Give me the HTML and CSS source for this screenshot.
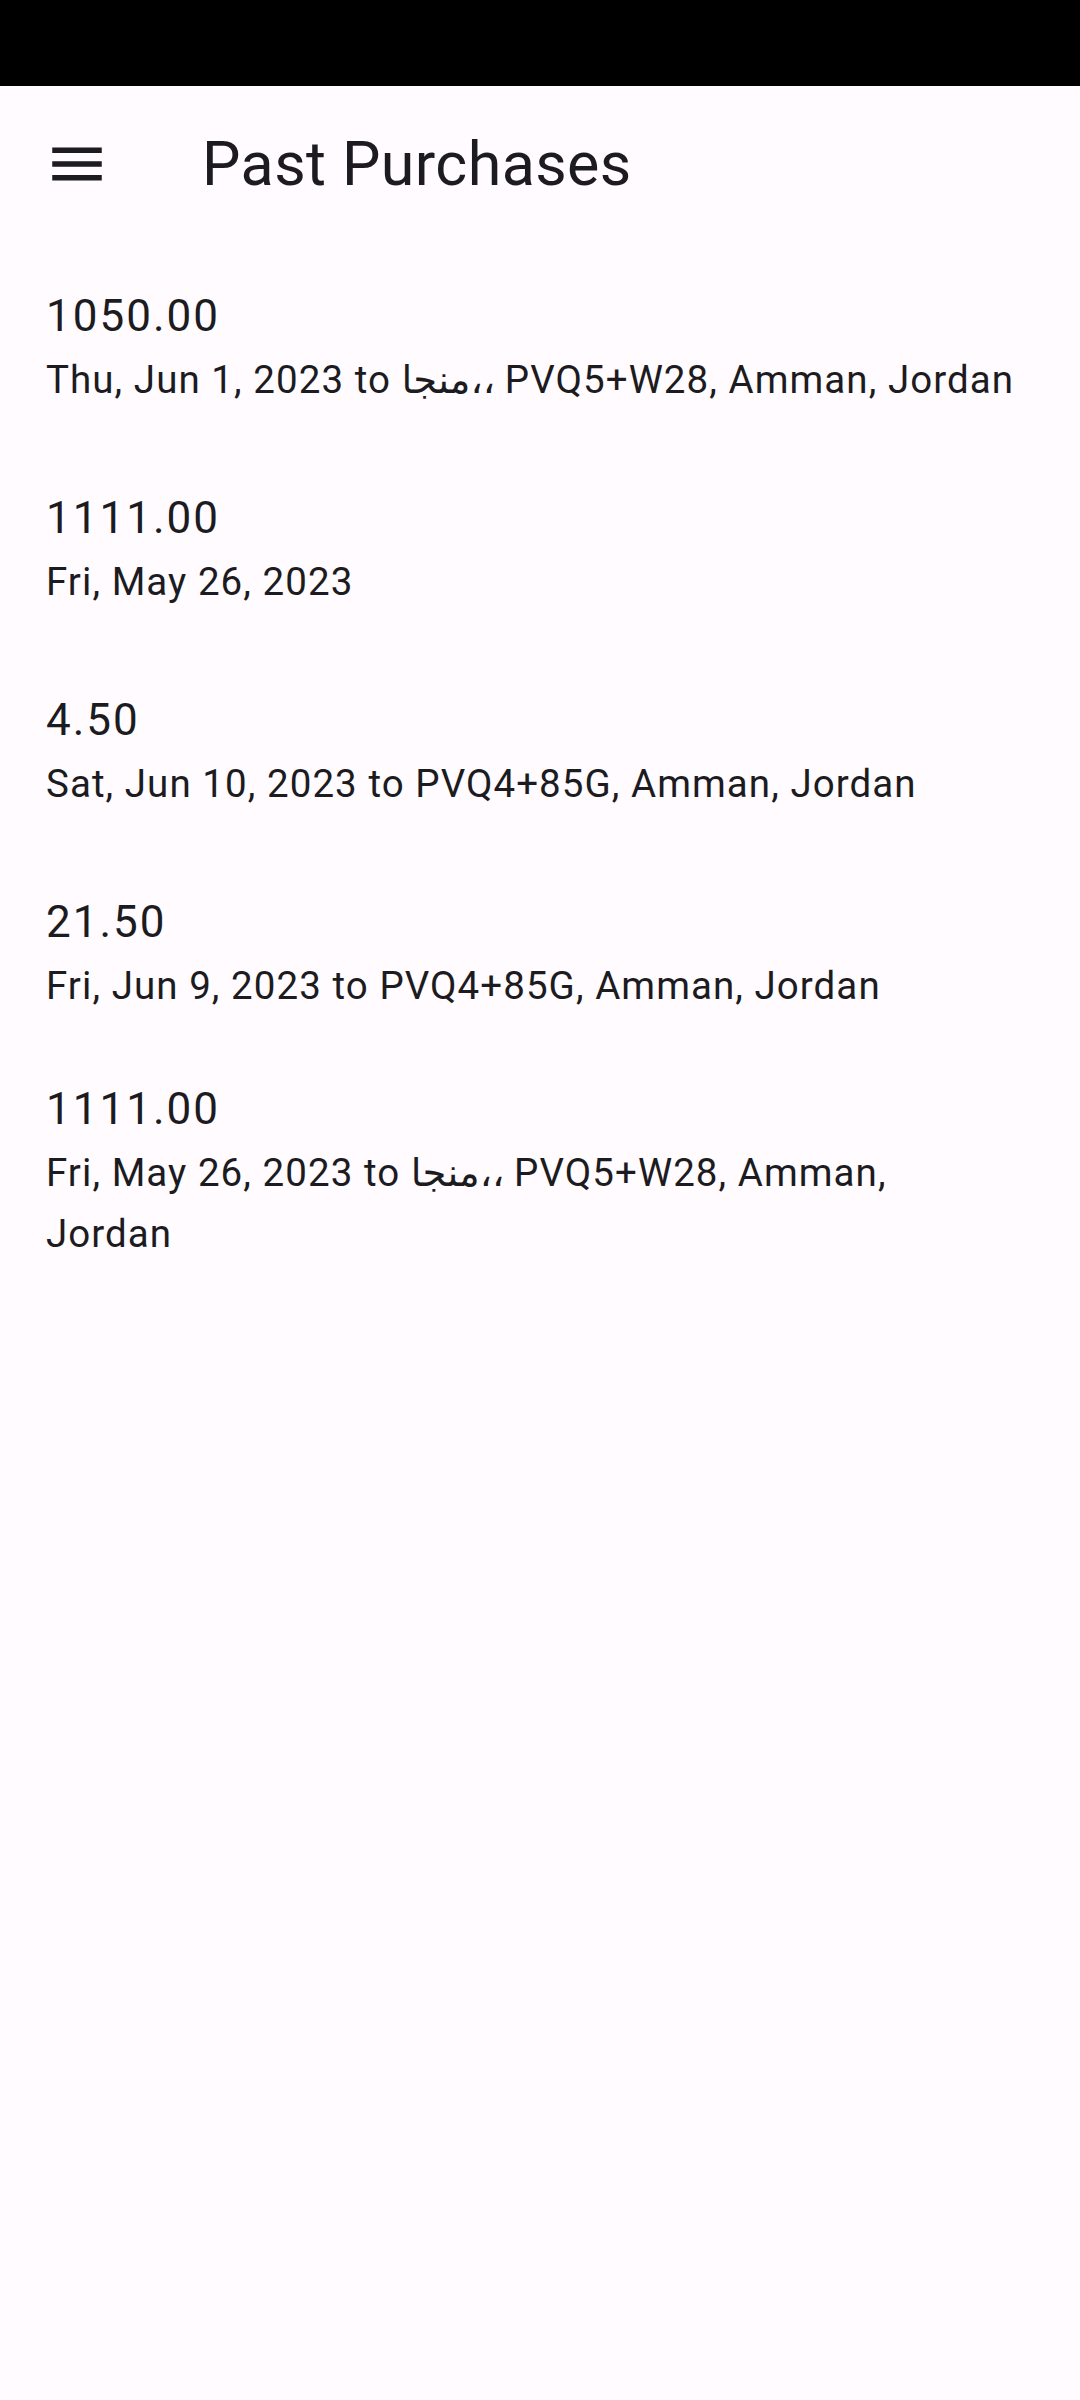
FILE: index.html
```html
<!DOCTYPE html>
<html lang="en">
<head>
<meta charset="utf-8">
<title>Past Purchases</title>
<link rel="stylesheet" href="styles.css">
</head>
<body>
<div class="status-bar"></div>
<header class="app-bar">
  <svg class="menu-icon" viewBox="0 0 24 24" aria-hidden="true">
    <path d="M3 18h18v-2H3v2zm0-5h18v-2H3v2zm0-7v2h18V6H3z"/>
  </svg>
  <h1 class="app-title">Past Purchases</h1>
</header>
<main class="list">
  <div class="tile">
    <div class="amount">1050.00</div>
    <div class="details">Thu, Jun 1, 2023 to منجا،، PVQ5+W28, Amman, Jordan</div>
  </div>
  <div class="tile">
    <div class="amount">1111.00</div>
    <div class="details">Fri, May 26, 2023</div>
  </div>
  <div class="tile">
    <div class="amount">4.50</div>
    <div class="details">Sat, Jun 10, 2023 to PVQ4+85G, Amman, Jordan</div>
  </div>
  <div class="tile">
    <div class="amount">21.50</div>
    <div class="details">Fri, Jun 9, 2023 to PVQ4+85G, Amman, Jordan</div>
  </div>
  <div class="tile tile-three">
    <div class="amount">1111.00</div>
    <div class="details">Fri, May 26, 2023 to منجا،، PVQ5+W28, Amman, Jordan</div>
  </div>
</main>
</body>
</html>
```
FILE: styles.css
```css
html, body {
  margin: 0;
  padding: 0;
}

body {
  width: 1080px;
  min-height: 2400px;
  background: #fffbfe;
  color: #1c1b1f;
  font-family: Roboto, "DejaVu Sans", "Noto Sans", sans-serif;
}

.status-bar {
  height: 86px;
  background: #000000;
}

.app-bar {
  height: 155px;
  display: flex;
  align-items: center;
  padding-left: 44px;
  box-sizing: border-box;
}

.menu-icon {
  width: 66px;
  height: 66px;
  fill: #1c1b1f;
  flex: none;
}

.app-title {
  margin: 0 0 0 92px;
  font-size: 61px;
  font-weight: 400;
  line-height: 76px;
  letter-spacing: 0.4px;
  color: #1c1b1f;
}

.list {
  display: flex;
  flex-direction: column;
  padding-top: 5px;
}

.tile {
  padding: 37px 62px 38px 46px;
  display: flex;
  flex-direction: column;
}

.tile-three {
  padding-top: 22px;
}

.amount {
  font-size: 44px;
  line-height: 66px;
  letter-spacing: 2px;
  color: #1c1b1f;
}

.details {
  font-size: 38.5px;
  line-height: 61px;
  letter-spacing: 1.06px;
  color: #1c1b1f;
}
```
